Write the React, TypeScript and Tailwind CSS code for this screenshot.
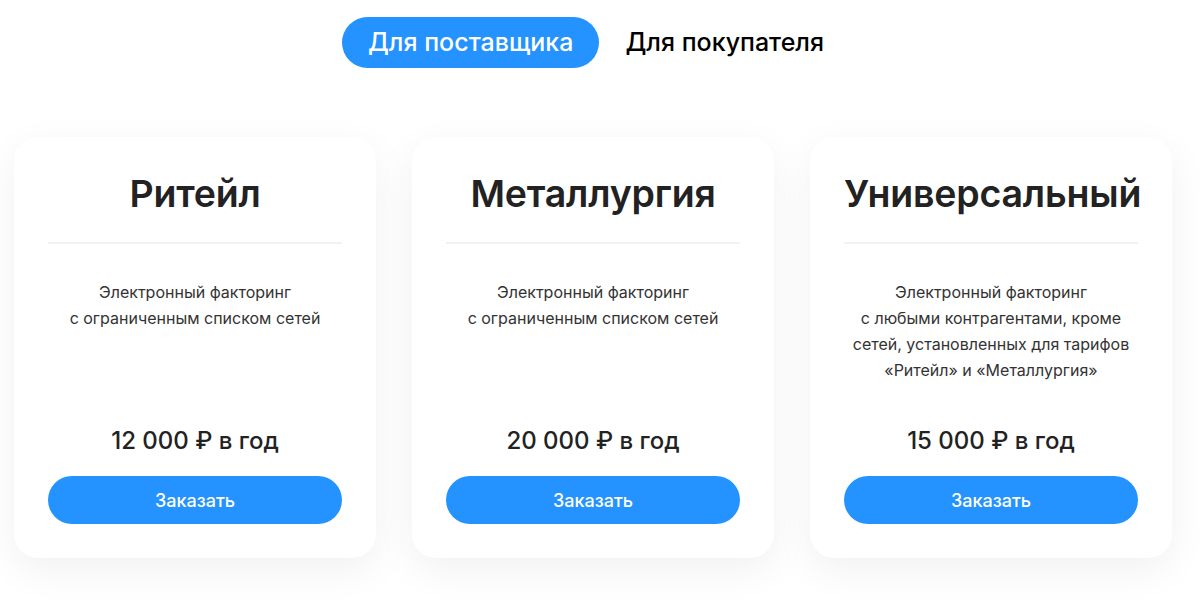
import React, { useState } from 'react';

interface Plan {
  title: string;
  lines: string[];
  price: string;
}

const plans: Plan[] = [
  { title: 'Ритейл', lines: ['Электронный факторинг', 'с ограниченным списком сетей'], price: '12 000 ₽ в год' },
  { title: 'Металлургия', lines: ['Электронный факторинг', 'с ограниченным списком сетей'], price: '20 000 ₽ в год' },
  {
    title: 'Универсальный',
    lines: [
      'Электронный факторинг',
      'с любыми контрагентами, кроме',
      'сетей, установленных для тарифов',
      '«Ритейл» и «Металлургия»',
    ],
    price: '15 000 ₽ в год',
  },
];

const PlanCard: React.FC<{ plan: Plan }> = ({ plan }) => (
  <div className="w-[362px] h-[421px] bg-white rounded-[24px] shadow-[0_12px_40px_rgba(0,0,0,0.06)] flex flex-col px-[34px] pt-[35px] pb-[34px]">
    <h2 className="text-center text-[37.5px] leading-[44px] font-semibold text-[#222] tracking-[-0.2px]">{plan.title}</h2>
    <div className="mt-[26px] h-[2px] bg-[#f2f2f2]" />
    <div className="mt-[35px] text-center text-[16px] leading-[26px] text-[#333]">
      {plan.lines.map((l, i) => (
        <p key={i}>{l}</p>
      ))}
    </div>
    <div className="flex-1" />
    <p className="text-center text-[24px] leading-[32px] text-[#222] font-medium">{plan.price}</p>
    <button className="mt-[19px] h-[48px] rounded-full bg-[#2492ff] text-white text-[18px] font-medium">Заказать</button>
  </div>
);

export default function App() {
  const [tab, setTab] = useState<'supplier' | 'buyer'>('supplier');
  return (
    <div className="w-[1200px] h-[604px] bg-white font-['Inter','Noto_Sans',sans-serif] overflow-hidden">
      <div className="pt-[17px] flex justify-center">
        <div className="flex pr-[8px]">
          <button
            onClick={() => setTab('supplier')}
            className={`h-[51px] px-[26px] rounded-full text-[25px] font-medium ${tab === 'supplier' ? 'bg-[#2492ff] text-white' : 'text-black'}`}
          >
            Для поставщика
          </button>
          <button
            onClick={() => setTab('buyer')}
            className={`h-[51px] px-[26px] rounded-full text-[25px] font-medium ${tab === 'buyer' ? 'bg-[#2492ff] text-white' : 'text-black'}`}
          >
            Для покупателя
          </button>
        </div>
      </div>
      <div className="mt-[69px] pl-[14px] flex gap-[36px]">
        {plans.map((p) => (
          <PlanCard key={p.title} plan={p} />
        ))}
      </div>
    </div>
  );
}
